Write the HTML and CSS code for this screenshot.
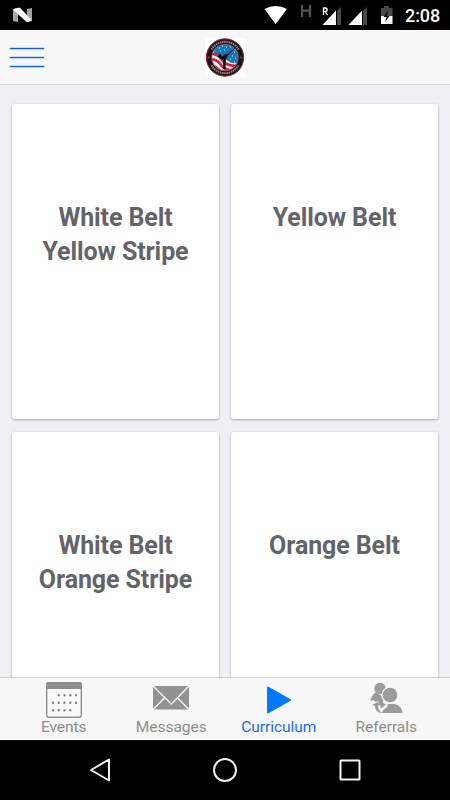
FILE: index.html
```html
<!DOCTYPE html>
<html lang="en">
<head>
<meta charset="utf-8">
<title>Curriculum</title>
<link rel="stylesheet" href="styles.css">
</head>
<body>
<div class="phone">
  <div class="status">
    <svg class="status-icons" viewBox="0 0 400 30" width="400" height="30">
      <path d="M13 9l5-1v14l-5-1zM27 9l5-1v13l-5 1z" fill="#a4a4a4"/>
      <path d="M14 9l4-1.300h2L31.500 20l-3 2h-2L13.500 10z" fill="#fff"/>
      <path d="M264.500 9Q275.500 3 287 9L275.700 24z" fill="#fff"/>
      <path d="M302 5v12M310 5v12M302 10.700h8" stroke="#555" stroke-width="2.200" fill="none"/>
      <path d="M341 7v18h-4V11z" fill="#484848"/>
      <path d="M336 10.500V25h-13.500z" fill="#fff"/>
      <path d="M323.500 15V8h1.700q2 0 2 1.800t-2 1.800h-1.700M325.300 11.600l2.200 3.400" stroke="#fff" stroke-width="1.300" fill="none"/>
      <path d="M367 7v18h-4V11z" fill="#484848"/>
      <path d="M362 10.500V25h-13.500z" fill="#fff"/>
      <path d="M381 8h3V6h5v2h3.500v9H381z" fill="#484848"/>
      <path d="M381 16h11.500v8H381z" fill="#fff"/>
      <path d="M388.500 10l-5 7h3l-1.500 5 4.500-6h-3z" fill="#000"/>
    </svg>
    <span class="clock">2:08</span>
  </div>
  <header class="header">
    <div class="menu"><i></i><i></i><i></i></div>
    <svg class="logo" viewBox="0 0 40 39" width="40" height="39">
      <defs><clipPath id="disc"><circle cx="20" cy="19.500" r="13"/></clipPath></defs>
      <path d="M0 0h40v39H0z" fill="#fff"/>
      <circle cx="20" cy="19.500" r="18.700" fill="#171719" stroke="#a51c34" stroke-width="1"/>
      <path d="M6.500 11.500a15.700 15.700 0 0 1 27 0M6.500 27.500a15.700 15.700 0 0 0 27 0" fill="none" stroke="#8c8c8c" stroke-width="2" stroke-dasharray="1.500 .7"/>
      <circle cx="20" cy="19.500" r="13.300" fill="#fff" stroke="#b52039" stroke-width=".8"/>
      <g clip-path="url(#disc)">
        <path d="M11 4h24v20q-7 3-12-1T9 15z" fill="#1478bd"/>
        <path d="M5 15.500q8 0 12 6.500t18 6M5 21q7 0 11 6t17 5.500M5 27q6 1 11 7" fill="none" stroke="#d91f3c" stroke-width="2.600"/>
        <path d="M14 10h1M17 8h1M21 9h1M25 9h1M15 13h1M19 12h1M29 14h1M27 18h1M30 20h1M25 21h1M29 24h1" stroke="#d8efff" stroke-width="1.200"/>
      </g>
      <path d="M31.500 8.500L22 18l-1.500 4-.5 9h-1.500l.2-9-2.700-1.500-3-2 .5-.5 4 .5 3-2 3-.5z" fill="#101012" stroke="#101012" stroke-width=".8"/>
      <circle cx="15" cy="17.500" r="1.300"/>
      <circle cx="3.700" cy="19.500" r="1.100" fill="#c51f3c"/><circle cx="36.300" cy="19.500" r="1.100" fill="#c51f3c"/>
    </svg>
  </header>
  <main class="content">
    <div class="card">White Belt<br>Yellow Stripe</div>
    <div class="card">Yellow Belt</div>
    <div class="card">White Belt<br>Orange Stripe</div>
    <div class="card">Orange Belt</div>
  </main>
  <nav class="tabs">
    <a class="tab">
      <svg viewBox="0 0 40 40" width="40" height="40">
        <rect x="2.700" y="2.700" width="34.600" height="34.600" rx="2.500" fill="#fafafa" stroke="#8e8e8e" stroke-width="1.400"/>
        <path d="M2 9V4.500Q2 2 4.500 2h31Q38 2 38 4.500V9z" fill="#8e8e8e"/>
        <path d="M14.800 15.300h20M9 22.800h26M9 30.300h20" stroke="#858585" stroke-width="2.500" stroke-linecap="round" stroke-dasharray="0 5.750" fill="none"/>
      </svg><span>Events</span>
    </a>
    <a class="tab">
      <svg viewBox="0 0 40 40" width="40" height="40">
        <path d="M2 6h36v23.500H2z" fill="#929292"/>
        <path d="M2 6l18.300 18L38 6M2 29.500l12-12M38 29.500l-12-12" fill="none" stroke="#f7f7f7" stroke-width="1.300"/>
      </svg><span>Messages</span>
    </a>
    <a class="tab active">
      <svg viewBox="0 0 40 40" width="40" height="40">
        <path d="M9 7.500L31 20 9 32.500z" fill="#007aff" stroke="#007aff" stroke-width="2" stroke-linejoin="round"/>
      </svg><span>Curriculum</span>
    </a>
    <a class="tab">
      <svg viewBox="0 0 40 40" width="40" height="40" fill="#9b9b9b">
        <circle cx="14" cy="8.500" r="5.700"/>
        <path d="M4.500 21q.5-5 5-8.500l5 2.500 3 6-2 2-3-2-3 1-2-2z"/>
        <path d="M15.500 33q1-3 5.500-6l1-3h7q7 2 7.500 9z"/>
        <circle cx="24" cy="15" r="8.500" fill="#f7f7f7"/>
        <circle cx="24" cy="15" r="7.300"/>
        <path d="M6 25l6-3 3 3-3 .500q0 5 4 7.500-7-.5-7-7zM12 20.500l4 1 2 2 2 1-5 4-1-4z"/>
      </svg><span>Referrals</span>
    </a>
  </nav>
  <div class="system">
    <svg viewBox="0 0 450 60" width="450" height="60" fill="none" stroke="#f2f2f2" stroke-width="2" stroke-linejoin="round">
      <path d="M109 19.500v21L91 30z"/>
      <circle cx="225" cy="30" r="11"/>
      <rect x="340.500" y="20.500" width="19" height="19" rx=".5"/>
    </svg>
  </div>
</div>
</body>
</html>
```
FILE: styles.css
```css
* { box-sizing: border-box; }
body { margin: 0; font-family: Roboto, sans-serif; background: #000; }
svg { display: block; }
.phone { width: 450px; height: 800px; display: flex; flex-direction: column; overflow: hidden; }
.status { height: 30px; flex: none; display: flex; background: #000; }
.status-icons { flex: none; }
.clock { color: #fff; font-size: 18px; line-height: 31px; font-weight: 500; margin-left: 5px; letter-spacing: -.1px; }
.header { height: 55px; flex: none; display: flex; align-items: center; justify-content: center; background: #f7f7f7; border-top: 1px solid #fff; border-bottom: 1px solid #d9d9db; }
.menu { width: 34px; display: flex; flex-direction: column; gap: 8px; margin-left: 10px; margin-right: 161px; }
.menu i { height: 1px; background: #0a5cff; box-shadow: 0 0 0 .2px #0a5cff; }
.logo { margin-right: 205px; flex: none; }
.content { flex: 1; min-height: 0; overflow: hidden; background: #efeff4; padding: 19px 12px 0; display: grid; grid-template-columns: 207px 207px; grid-auto-rows: 315px; gap: 12.500px 12px; align-content: start; }
.card { background: #fff; border-radius: 2.500px; box-shadow: 0 1px 2.500px rgba(0,0,0,.32); padding-top: 97px; text-align: center; font-size: 25px; letter-spacing: -.1px; line-height: 34px; font-weight: 700; color: #636469; }
.tabs { height: 63px; flex: none; background: #f7f7f7; border-top: 1px solid #cfcfd1; border-bottom: 1px solid #fff; display: flex; justify-content: center; padding: 2px 10px 0; }
.tab { width: 107.500px; display: flex; flex-direction: column; align-items: center; color: #8c8c8c; font-size: 15.500px; line-height: 16px; letter-spacing: -.03px; }
.tab span { margin-top: -1px; }
.active { color: #1769ff; }
.system { height: 60px; flex: none; background: #000; }
```
